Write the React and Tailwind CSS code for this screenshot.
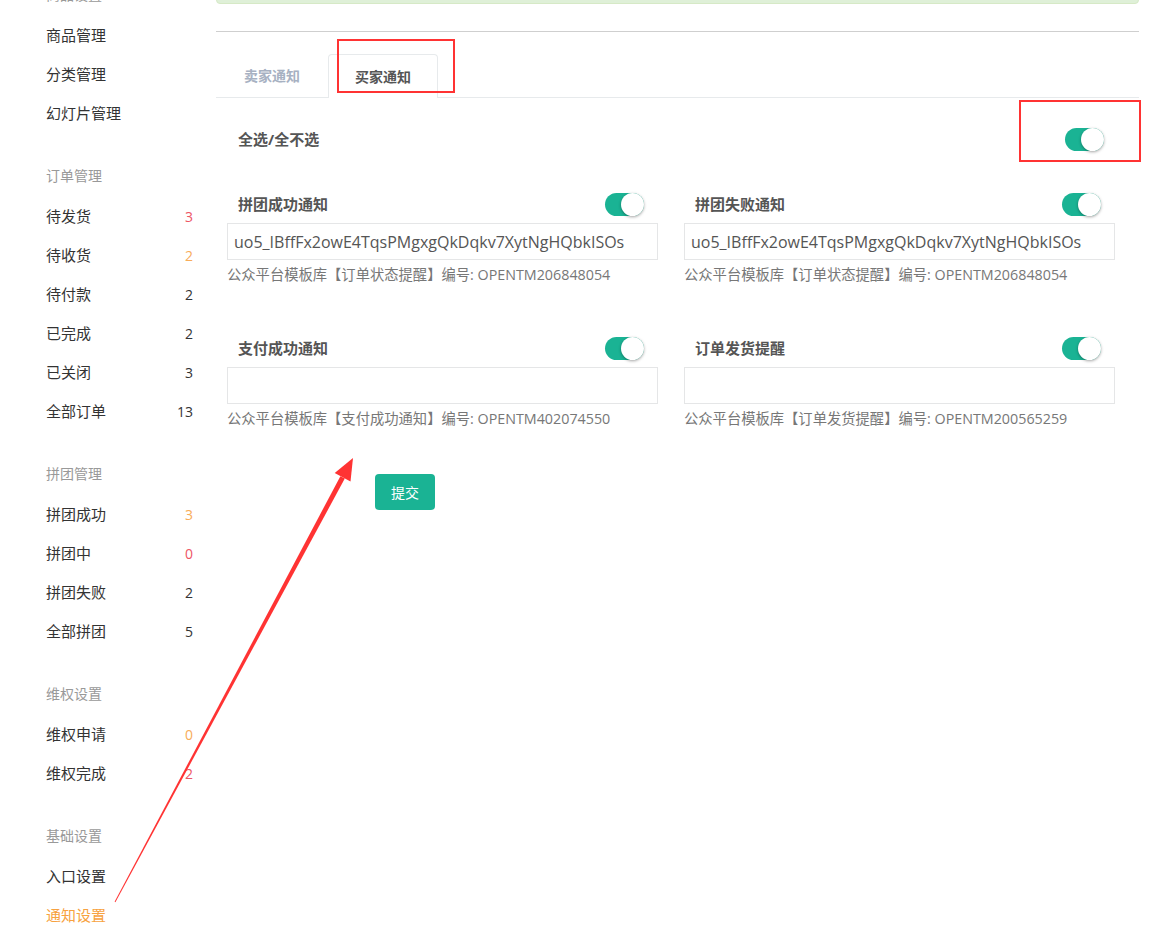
import { useState } from 'react';

const sections = [
  {
    title: '商品设置',
    items: [{ label: '商品管理' }, { label: '分类管理' }, { label: '幻灯片管理' }],
  },
  {
    title: '订单管理',
    items: [
      { label: '待发货', count: 3, tone: 'red' },
      { label: '待收货', count: 2, tone: 'orange' },
      { label: '待付款', count: 2 },
      { label: '已完成', count: 2 },
      { label: '已关闭', count: 3 },
      { label: '全部订单', count: 13 },
    ],
  },
  {
    title: '拼团管理',
    items: [
      { label: '拼团成功', count: 3, tone: 'orange' },
      { label: '拼团中', count: 0, tone: 'red' },
      { label: '拼团失败', count: 2 },
      { label: '全部拼团', count: 5 },
    ],
  },
  {
    title: '维权设置',
    items: [
      { label: '维权申请', count: 0, tone: 'orange' },
      { label: '维权完成', count: 2, tone: 'red' },
    ],
  },
  {
    title: '基础设置',
    items: [{ label: '入口设置' }, { label: '通知设置', active: true }],
  },
];

const notices = [
  {
    title: '拼团成功通知',
    value: 'uo5_IBffFx2owE4TqsPMgxgQkDqkv7XytNgHQbkISOs',
    hint: '公众平台模板库【订单状态提醒】编号: OPENTM206848054',
  },
  {
    title: '拼团失败通知',
    value: 'uo5_IBffFx2owE4TqsPMgxgQkDqkv7XytNgHQbkISOs',
    hint: '公众平台模板库【订单状态提醒】编号: OPENTM206848054',
  },
  {
    title: '支付成功通知',
    value: '',
    hint: '公众平台模板库【支付成功通知】编号: OPENTM402074550',
  },
  {
    title: '订单发货提醒',
    value: '',
    hint: '公众平台模板库【订单发货提醒】编号: OPENTM200565259',
  },
];

function Toggle() {
  return (
    <div className="relative h-[23px] w-[39px] rounded-full bg-[#1ab394]">
      <div className="absolute right-0 top-0 h-[23px] w-[23px] rounded-full bg-white shadow-[0_1px_3px_rgba(0,0,0,0.35)]" />
    </div>
  );
}

function Sidebar() {
  return (
    <div className="w-[216px] shrink-0 -mt-[24px] pl-[46px] pr-[23px] text-[15px]">
      {sections.map((s) => (
        <div key={s.title} className="mb-[24px]">
          <div className="flex h-[40px] items-center pb-[3px] text-[14px] text-[#999]">{s.title}</div>
          {s.items.map((it) => (
            <div key={it.label} className="flex h-[39px] items-center justify-between">
              <span className={it.active ? 'text-[#f7a240]' : 'text-[#333]'}>{it.label}</span>
              {it.count !== undefined && (
                <span
                  className={
                    it.tone === 'red'
                      ? 'text-[14px] text-[#ed5565]'
                      : it.tone === 'orange'
                      ? 'text-[14px] text-[#f8ac59]'
                      : 'text-[14px] text-[#333]'
                  }
                >
                  {it.count}
                </span>
              )}
            </div>
          ))}
        </div>
      ))}
    </div>
  );
}

function NoticeField({ n }) {
  return (
    <div>
      <div className="flex h-[30px] items-center justify-between pl-[11px] pr-[14px]">
        <span className="text-[15px] font-bold text-[#555]">{n.title}</span>
        <Toggle />
      </div>
      <div className="mt-[4px] flex h-[37px] items-center border border-[#e5e6e7] px-[6px] text-[16px] text-[#555]">
        {n.value}
      </div>
      <div className="mt-[5px] text-[14.3px] leading-[20px] text-[#777]">{n.hint}</div>
    </div>
  );
}

export default function App() {
  const [tab, setTab] = useState('buyer');

  return (
    <div className="relative min-h-[934px] overflow-hidden bg-white font-['Open_Sans','Noto_Sans_CJK_SC',sans-serif]">
      <div className="flex">
        <Sidebar />

        <div className="flex-1 pr-[10px]">
          <div className="-mt-[36px] h-[40px] rounded border border-[#d6e9c6] bg-[#dff0d8]" />
          <div className="mt-[27px] border-t border-[#cfcfcf]" />

          <div className="mt-[22px] flex border-b border-[#e7eaec]">
            <button
              onClick={() => setTab('seller')}
              className="h-[43px] px-[28px] text-[14px] font-bold text-[#a7b1c2]"
            >
              卖家通知
            </button>
            <button
              onClick={() => setTab('buyer')}
              className="-mb-px h-[44px] rounded-t border border-b-0 border-[#e7eaec] bg-white px-[26px] text-[14px] font-bold text-[#555]"
            >
              买家通知
            </button>
          </div>

          <div className="pt-[26px]">
            <div className="flex h-[30px] items-center justify-between pl-[22px] pr-[35px]">
              <span className="text-[15px] font-bold text-[#555]">全选/全不选</span>
              <Toggle />
            </div>

            <div className="mt-[35px] grid grid-cols-2 gap-x-[26px] gap-y-[48px] pl-[11px] pr-[24px]">
              {notices.map((n) => (
                <NoticeField key={n.title} n={n} />
              ))}
            </div>

            <div className="mt-[45px] pl-[159px]">
              <button className="h-[36px] w-[60px] rounded bg-[#1ab394] text-[14px] text-white">提交</button>
            </div>
          </div>
        </div>
      </div>

      {/* annotation overlay */}
      <div className="absolute left-[337px] top-[39px] h-[54px] w-[118px] border-2 border-[#f33]" />
      <div className="absolute left-[1019px] top-[100px] h-[62px] w-[122px] border-2 border-[#f33]" />
      <svg className="pointer-events-none absolute left-0 top-0" width="1149" height="934">
        <polygon fill="#f33" points="114.6,901.8 115.4,902.2 344.8,478.6 340.4,476.2" />
        <polygon fill="#f33" points="353,458 350.5,481.6 334.7,473.1" />
      </svg>
    </div>
  );
}
